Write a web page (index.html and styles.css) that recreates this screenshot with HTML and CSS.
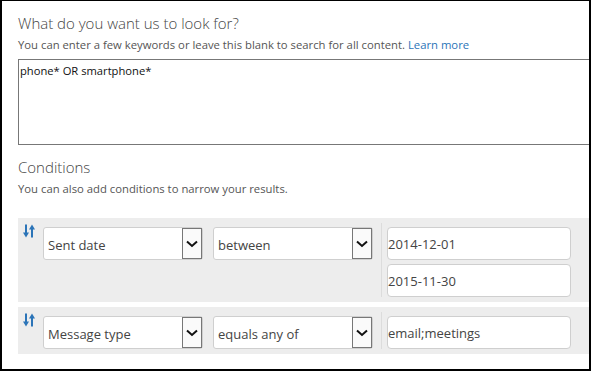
FILE: index.html
```html
<!DOCTYPE html>
<html>
<head>
<meta charset="utf-8">
<link rel="stylesheet" href="styles.css">
</head>
<body>
<div class="frame">
  <h2 class="title">What do you want us to look for?</h2>
  <p class="hint">You can enter a few keywords or leave this blank to search for all content. <a class="link" href="#">Learn more</a></p>
  <textarea class="query" readonly>phone* OR smartphone*</textarea>

  <h2 class="title title-cond">Conditions</h2>
  <p class="hint">You can also add conditions to narrow your results.</p>

  <div class="cond cond-first">
    <svg class="sort" width="12" height="14" viewBox="0 0 12 14">
      <rect x="2" y="0.5" width="2" height="10" fill="#2b74b8"/>
      <polygon points="0,8.5 6,8.5 3,13.5" fill="#2b74b8"/>
      <rect x="8" y="3.5" width="2" height="10" fill="#2b74b8"/>
      <polygon points="6,5.5 12,5.5 9,0.5" fill="#2b74b8"/>
    </svg>
    <div class="select"><span class="sel-text">Sent date</span><span class="drop"><svg width="12" height="8" viewBox="0 0 12 8"><polyline points="1,1.5 6,6 11,1.5" fill="none" stroke="#111" stroke-width="2"/></svg></span></div>
    <div class="select"><span class="sel-text">between</span><span class="drop"><svg width="12" height="8" viewBox="0 0 12 8"><polyline points="1,1.5 6,6 11,1.5" fill="none" stroke="#111" stroke-width="2"/></svg></span></div>
    <div class="divider"></div>
    <div class="values">
      <div class="input">2014-12-01</div>
      <div class="input">2015-11-30</div>
    </div>
  </div>

  <div class="cond">
    <svg class="sort" width="12" height="14" viewBox="0 0 12 14">
      <rect x="2" y="0.5" width="2" height="10" fill="#2b74b8"/>
      <polygon points="0,8.5 6,8.5 3,13.5" fill="#2b74b8"/>
      <rect x="8" y="3.5" width="2" height="10" fill="#2b74b8"/>
      <polygon points="6,5.5 12,5.5 9,0.5" fill="#2b74b8"/>
    </svg>
    <div class="select"><span class="sel-text">Message type</span><span class="drop"><svg width="12" height="8" viewBox="0 0 12 8"><polyline points="1,1.5 6,6 11,1.5" fill="none" stroke="#111" stroke-width="2"/></svg></span></div>
    <div class="select"><span class="sel-text">equals any of</span><span class="drop"><svg width="12" height="8" viewBox="0 0 12 8"><polyline points="1,1.5 6,6 11,1.5" fill="none" stroke="#111" stroke-width="2"/></svg></span></div>
    <div class="divider"></div>
    <div class="values">
      <div class="input">email;meetings</div>
    </div>
  </div>
</div>
</body>
</html>
```
FILE: styles.css
```css
html, body {
  margin: 0;
  padding: 0;
  background: #fff;
}
.frame {
  width: 591px;
  height: 371px;
  box-sizing: border-box;
  border-top: 1px solid #000;
  border-left: 2px solid #000;
  border-right: 2px solid #000;
  border-bottom: 2px solid #000;
  padding-left: 16px;
  overflow: hidden;
  font-family: "Open Sans", "Noto Sans", sans-serif;
}
.title {
  margin: 12px 0 0 0;
  font-size: 15px;
  font-weight: 300;
  line-height: 20px;
  color: #444;
}
.title-cond {
  margin-top: 12px;
}
.hint {
  margin: 4px 0 0 0;
  font-size: 11.3px;
  line-height: 16px;
  color: #555;
}
.link {
  color: #2b74b8;
  text-decoration: none;
}
.query {
  display: block;
  margin: 6px 0 0 0;
  width: calc(100% + 2px);
  height: 86px;
  box-sizing: border-box;
  border: 1px solid #777;
  border-radius: 0;
  padding: 2px 0 0 1px;
  font-family: "Open Sans", "Noto Sans", sans-serif;
  font-size: 11.2px;
  line-height: 18px;
  color: #111;
  resize: none;
  overflow: hidden;
  outline: none;
}
.cond {
  display: flex;
  align-items: flex-start;
  background: #ededed;
  padding: 9px 0 5px 5px;
  margin-top: 5px;
}
.cond-first {
  margin-top: 21px;
}
.sort {
  margin-top: -3px;
  margin-right: 8px;
  flex: none;
}
.select {
  display: flex;
  align-items: center;
  justify-content: space-between;
  width: 160px;
  height: 33px;
  box-sizing: border-box;
  border: 1px solid #cfcfcf;
  border-radius: 3px;
  background: #fff;
  margin-right: 10px;
  padding-left: 4px;
}
.select + .select {
  margin-right: 8px;
}
.sel-text {
  font-size: 13px;
  color: #444;
  padding-top: 3px;
}
.drop {
  display: flex;
  align-items: center;
  justify-content: center;
  width: 20px;
  height: 31px;
  box-sizing: border-box;
  border: 1px solid #777;
  background: #fafafa;
}
.divider {
  align-self: stretch;
  width: 1px;
  background: #dcdcdc;
  margin: -4px 5px 0 0;
}
.values {
  display: flex;
  flex-direction: column;
  gap: 4px;
}
.input {
  width: 184px;
  height: 33px;
  box-sizing: border-box;
  border: 1px solid #cfcfcf;
  border-radius: 4px;
  background: #fff;
  padding-left: 0;
  display: flex;
  align-items: center;
  font-size: 13px;
  color: #444;
}
```
